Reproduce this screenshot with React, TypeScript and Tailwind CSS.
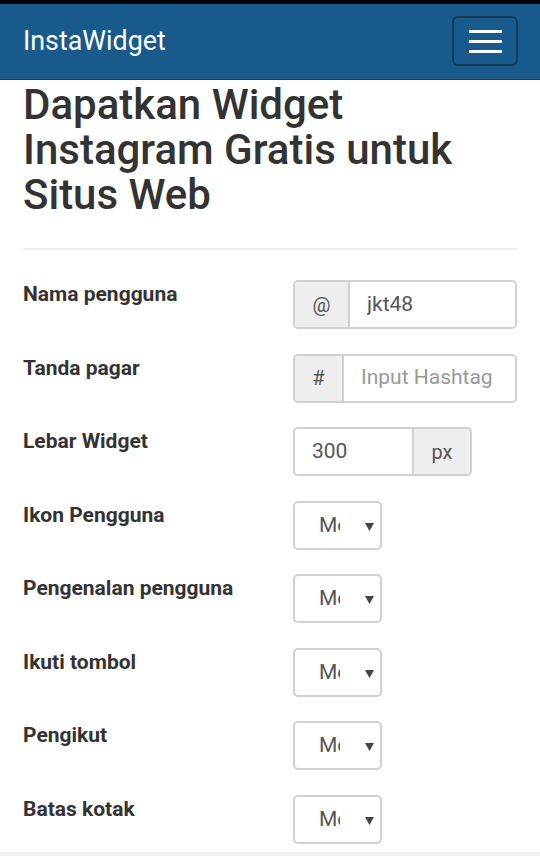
import React from "react"

const selects = ["Ikon Pengguna", "Pengenalan pengguna", "Ikuti tombol", "Pengikut", "Batas kotak"]

function FakeSelect() {
    return (
        <div className="relative h-[49px] w-[89px] rounded-[5px] border-2 border-[#d0d0d0] bg-white">
            <div className="absolute left-[24px] top-0 h-full w-[21px] overflow-hidden">
                <span className="block whitespace-nowrap text-[21px] leading-[45px] text-[#555]">Menunjukkan</span>
            </div>
            <svg className="absolute left-[70px] top-[20px]" width="9" height="8" viewBox="0 0 9 8">
                <path d="M0 0 L9 0 L4.5 8 Z" fill="#444" />
            </svg>
        </div>
    )
}

export default function App() {
    return (
        <div className="w-[540px] h-[856px] overflow-hidden bg-white font-['Roboto','Liberation_Sans',sans-serif]">
            <div className="h-[4px] bg-black" />
            <nav className="flex h-[76px] items-start justify-between border-b border-[#0f4166] bg-[#175a8b] pl-[23px] pr-[22px]">
                <a className="mt-[20px] text-[26.8px] leading-[34px] text-white">InstaWidget</a>
                <button className="mt-[12px] flex h-[50px] w-[66px] flex-col items-center justify-center gap-[7px] rounded-[6px] border-2 border-[#113a5b]">
                    <span className="block h-[3px] w-[33px] bg-white" />
                    <span className="block h-[3px] w-[33px] bg-white" />
                    <span className="block h-[3px] w-[33px] bg-white" />
                </button>
            </nav>
            <div className="px-[23px]">
                <h1 className="mt-[2px] text-[42px] font-medium leading-[45px] text-[#333]">
                    Dapatkan Widget Instagram Gratis untuk Situs Web
                </h1>
                <hr className="mt-[31px] mb-[30px] border-t-2 border-[#eeeeee]" />
                <form className="flex flex-col gap-[24.5px]">
                    <div className="flex">
                        <label className="w-[270px] pt-[1px] text-[21px] font-bold leading-[26px] text-[#333]">Nama pengguna</label>
                        <div className="flex h-[49px] w-[224px] overflow-hidden rounded-[5px] border-2 border-[#d0d0d0]">
                            <span className="flex w-[55px] items-center justify-center border-r-2 border-[#d0d0d0] bg-[#eeeeee] text-[20px] text-[#555]">@</span>
                            <input className="min-w-0 flex-1 bg-white pl-[17px] text-[21px] text-[#555] outline-none" defaultValue="jkt48" />
                        </div>
                    </div>
                    <div className="flex">
                        <label className="w-[270px] pt-[1px] text-[21px] font-bold leading-[26px] text-[#333]">Tanda pagar</label>
                        <div className="flex h-[49px] w-[224px] overflow-hidden rounded-[5px] border-2 border-[#d0d0d0]">
                            <span className="flex w-[49px] items-center justify-center border-r-2 border-[#d0d0d0] bg-[#eeeeee] text-[20px] text-[#555]">#</span>
                            <input className="min-w-0 flex-1 bg-white pl-[17px] text-[21px] text-[#555] outline-none placeholder:text-[#999]" placeholder="Input Hashtag" />
                        </div>
                    </div>
                    <div className="flex">
                        <label className="w-[270px] pt-[1px] text-[21px] font-bold leading-[26px] text-[#333]">Lebar Widget</label>
                        <div className="flex h-[49px] w-[179px] overflow-hidden rounded-[5px] border-2 border-[#d0d0d0]">
                            <input className="w-[117px] bg-white pl-[17px] text-[21px] text-[#555] outline-none" defaultValue="300" />
                            <span className="flex flex-1 items-center justify-center border-l-2 border-[#d0d0d0] bg-[#eeeeee] text-[20px] text-[#555]">px</span>
                        </div>
                    </div>
                    {selects.map((s) => (
                        <div key={s} className="flex">
                            <label className="w-[270px] pt-[1px] text-[21px] font-bold leading-[26px] text-[#333]">{s}</label>
                            <FakeSelect />
                        </div>
                    ))}
                </form>
            </div>
            <div className="mt-[8px] h-[10px] bg-[#f2f2f2]" />
        </div>
    )
}
